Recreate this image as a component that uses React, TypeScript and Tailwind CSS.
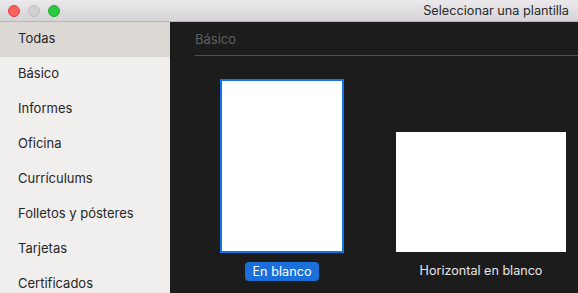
import React from "react";

const categories = [
    "Todas",
    "Básico",
    "Informes",
    "Oficina",
    "Currículums",
    "Folletos y pósteres",
    "Tarjetas",
    "Certificados",
];

function TrafficLights() {
    return (
        <div className="flex items-center gap-[8px] pl-[8px]">
            <span className="block w-[12px] h-[12px] rounded-full bg-[#fc605c] border border-[#e0443e]" />
            <span className="block w-[12px] h-[12px] rounded-full bg-[#d2d0d2] border border-[#c1bfc1]" />
            <span className="block w-[12px] h-[12px] rounded-full bg-[#2ac93f] border border-[#1fad2f]" />
        </div>
    );
}

export default function App() {
    return (
        <div className="w-[578px] h-[293px] overflow-hidden flex flex-col font-['Inter','Liberation_Sans',sans-serif] text-[13px]">
            <div className="h-[22px] shrink-0 flex items-center justify-between bg-gradient-to-b from-[#ebe9eb] to-[#d5d3d5] border-b border-[#b9b7b9]">
                <TrafficLights />
                <div className="pr-[9px] text-[#2b2b2b] text-[12.7px]">Seleccionar una plantilla</div>
            </div>
            <div className="flex flex-1 min-h-0">
                <div className="w-[170px] shrink-0 bg-[#f1efed] flex flex-col">
                    {categories.map((c, i) => (
                        <div
                            key={c}
                            className={
                                "h-[35px] shrink-0 flex items-center pl-[18px] pb-[1px] text-[#262626] " +
                                (i === 0 ? "bg-[#dcd9d5]" : "")
                            }
                        >
                            {c}
                        </div>
                    ))}
                </div>
                <div className="flex-1 bg-[#1c1c1c] flex flex-col">
                    <div className="ml-[25px] h-[34px] pt-[2px] flex items-center border-b border-[#4f4f4f] text-[#5f5f5f]">
                        Básico
                    </div>
                    <div className="flex pl-[22px] pt-[23px] gap-[19px]">
                        <div className="w-[180px] flex flex-col items-center">
                            <div className="h-[174px] flex items-end">
                                <div className="w-[124px] h-[174px] bg-white border-2 border-[#1473e6]" />
                            </div>
                            <div className="mt-[9px] h-[19px] px-[7px] flex items-center rounded-[4px] bg-[#1a6fdb] text-white text-[12.7px]">
                                En blanco
                            </div>
                        </div>
                        <div className="w-[180px] flex flex-col items-center">
                            <div className="h-[174px] flex items-end pb-[1px]">
                                <div className="w-[170px] h-[120px] bg-white" />
                            </div>
                            <div className="mt-[9px] h-[19px] flex items-center text-[#e6e6e6] text-[12.6px]">
                                Horizontal en blanco
                            </div>
                        </div>
                    </div>
                </div>
            </div>
        </div>
    );
}
